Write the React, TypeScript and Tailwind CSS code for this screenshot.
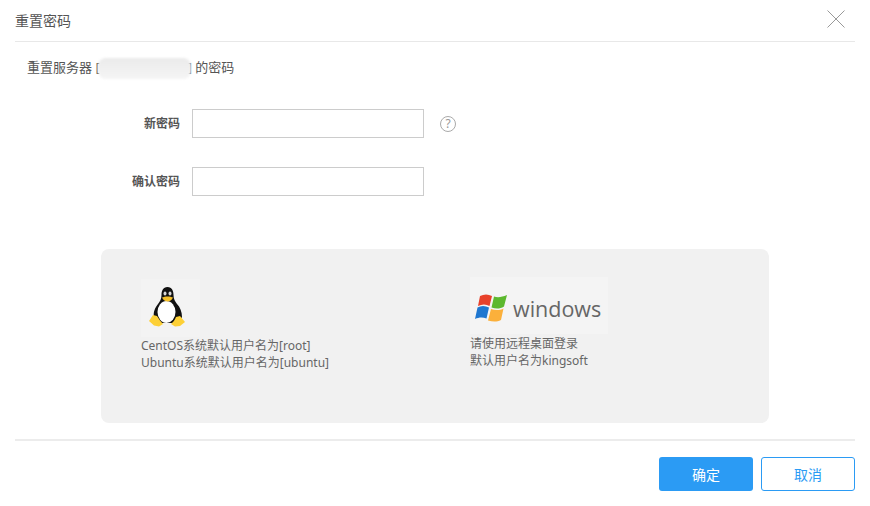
export default function App() {
  const font = { fontFamily: '"Noto Sans", "Noto Sans CJK SC", sans-serif' };
  return (
    <div className="w-[870px] h-[506px] bg-white text-[#666666] overflow-hidden flex flex-col" style={font}>
      <header className="mx-[15px] h-[42px] border-b border-[#e8e8e8] flex items-center justify-between shrink-0">
        <h1 className="text-[14px] font-normal text-[#555555] leading-none">重置密码</h1>
        <svg width="20" height="20" viewBox="0 0 20 20" className="mr-[9px] mt-[-3px]" fill="none" stroke="#999999" strokeWidth="1">
          <path d="M1.5 1.5 L18.5 18.5 M18.5 1.5 L1.5 18.5" />
        </svg>
      </header>

      <p className="ml-[27px] mt-[15px] h-[20px] flex items-center text-[13px] leading-[20px] text-[#555555] shrink-0">
        <span>重置服务器 [</span>
        <span className="w-[93px] ml-[-2px] mr-[-3px] h-[21px] mt-[3px] rounded-[8px] bg-linear-to-b from-[#ebebeb] to-[#f5f5f5] blur-[1px]" />
        <span>] 的密码</span>
      </p>

      <div className="mt-[32px] flex items-center h-[29px] shrink-0">
        <label className="w-[180px] text-right text-[12px] font-bold text-[#555555]">新密码</label>
        <input className="ml-[12px] w-[232px] h-[29px] border border-[#cccccc] bg-white outline-none" />
        <span className="ml-[16px] mt-[1px] w-[16px] h-[16px] rounded-full border border-[#aaaaaa] text-[#999999] text-[12px] leading-[14px] text-center">?</span>
      </div>
      <div className="mt-[29px] flex items-center h-[29px] shrink-0">
        <label className="w-[180px] text-right text-[12px] font-bold text-[#555555]">确认密码</label>
        <input className="ml-[12px] w-[232px] h-[29px] border border-[#cccccc] bg-white outline-none" />
      </div>

      <section className="ml-[101px] mt-[53px] w-[668px] h-[174px] rounded-[8px] bg-[#f1f1f1] flex shrink-0 text-[12px] leading-[17px] text-[#666666]">
        <div className="ml-[40px] mt-[30px] w-[329px] shrink-0">
          <div className="w-[59px] h-[58px] bg-[#f3f3f3] pl-[7px] pt-[7px]">
            <svg width="38" height="42" viewBox="0 0 38 42" className="blur-[0.4px]">
              <path d="M19.500 1C15 1 13.500 5 13.500 9C13.500 13 12 15 10 18C7 22 5 26 6 31L8 37L31 37L34 31C34 26 32 21 29 18C27 15 25.500 13 25.500 9C25.500 5 24 1 19.500 1Z" fill="#111111" />
              <ellipse cx="18.500" cy="26" rx="9" ry="11" fill="#ffffff" />
              <ellipse cx="17" cy="7.500" rx="1.500" ry="2" fill="#d8d8d8" />
              <ellipse cx="22" cy="7.500" rx="1.500" ry="2" fill="#d8d8d8" />
              <path d="M14 11.500C17 10 22 10 25 11.500C24 14 21.500 15.500 19.500 15.500C17.500 15.500 15 14 14 11.500Z" fill="#f5c02a" />
              <path d="M1 35L5 29L9 30C11 33 13 36 15 38L11 40.500L6 39.500Z" fill="#fdd036" />
              <path d="M37 36L32 30L28 31C27 34 25 36 23 38L27 40.500L32 40Z" fill="#fdd036" />
            </svg>
          </div>
          <p>CentOS系统默认用户名为[root]</p>
          <p>Ubuntu系统默认用户名为[ubuntu]</p>
        </div>
        <div className="mt-[28px]">
          <div className="w-[138px] h-[57px] bg-[#f4f4f4] flex items-start">
            <svg width="32" height="29" viewBox="0 0 32 29" className="ml-[5px] mt-[16px] blur-[0.4px]">
              <path d="M5 3C9 1 13 1 17 3L14.500 13C11 11 7 11 3 13Z" fill="#e8412a" />
              <path d="M19 3.500C23 5 27 4 32 2L29 13.500C25 16 21 16 16.500 14.500Z" fill="#5cb82e" />
              <path d="M2.500 14.500C6 12.500 10 12.500 14 14.500L11.500 25.500C8 24 4 24 0 26Z" fill="#1f77d0" />
              <path d="M16 16C20 17.500 25 17.500 28.500 15.500L26 27C22 29 18 29 13 27.500Z" fill="#fbb03b" />
            </svg>
            <span className="ml-[6px] mt-[21px] text-[21.5px] leading-none font-medium text-[#666666]" style={{ fontFamily: '"Open Sans", sans-serif' }}>windows</span>
          </div>
          <p className="mt-[1px]">请使用远程桌面登录</p>
          <p>默认用户名为kingsoft</p>
        </div>
      </section>

      <footer className="mx-[15px] mt-[16px] border-t-2 border-[#ececec] flex justify-end gap-[8px] pt-[16px] shrink-0">
        <button className="w-[94px] h-[34px] rounded-[3px] bg-[#2b9bf4] text-white text-[14px]">确定</button>
        <button className="w-[94px] h-[34px] rounded-[3px] border border-[#2b9bf4] bg-white text-[#2b9bf4] text-[14px]">取消</button>
      </footer>
    </div>
  );
}
